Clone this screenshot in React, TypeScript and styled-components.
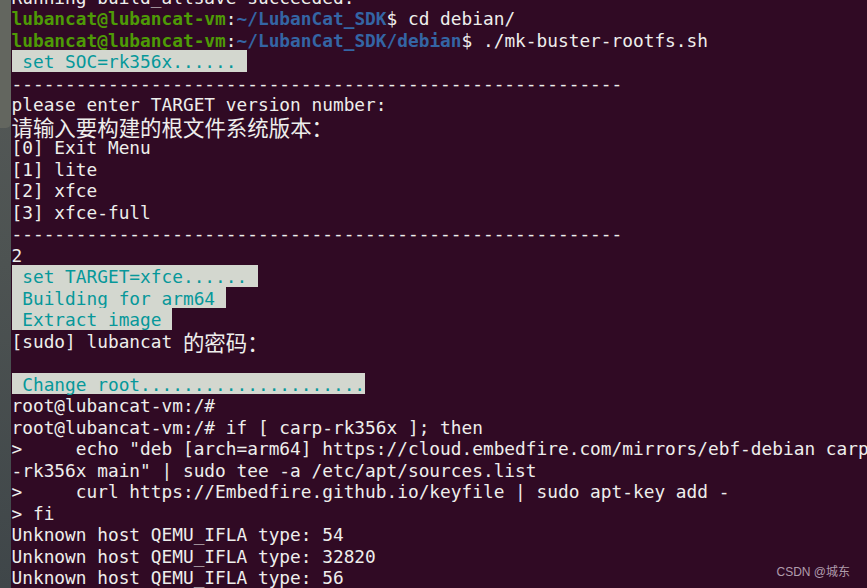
import React from "react";
import styled, { createGlobalStyle } from "styled-components";

const Global = createGlobalStyle`
  html, body { margin: 0; padding: 0; background: #300a24; overflow: hidden; }
  #root { height: 100vh; }
`;

const Page = styled.div`
  position: relative;
  display: flex;
  height: 100vh;
  overflow: hidden;
  background: #300a24;
`;

const Dock = styled.div`
  flex: 0 0 11px;
  display: flex;
  flex-direction: column;
  background: linear-gradient(180deg, #565a58 0%, #4d5352 45%, #3f4649 100%);
`;

const DockTop = styled.div`
  height: 128px;
  background: #63665f;
  border-bottom-right-radius: 5px;
`;

const Terminal = styled.div`
  flex: 1;
  min-width: 0;
  margin-top: -14.5px;
  padding-left: 0.5px;
  font-family: "DejaVu Sans Mono", "Liberation Mono", monospace;
  font-size: 17.81px;
  color: #eeeeec;
`;

const Line = styled.div`
  height: 21.5px;
  line-height: 21.5px;
  padding-top: 1px;
  box-sizing: border-box;
  white-space: pre;
`;

const Prompt = styled.span<{ $tone: "user" | "path" }>`
  font-weight: bold;
  color: ${(p) => (p.$tone === "user" ? "#4e9a06" : "#3465a4")};
`;

const Highlight = styled.span`
  display: inline-block;
  vertical-align: top;
  margin-top: -1px;
  padding-top: 1px;
  height: 21.5px;
  box-sizing: border-box;
  line-height: 21.5px;
  background: #d3d7cf;
  color: #06989a;
`;

const Cjk = styled.span`
  font-family: "Noto Sans CJK SC", sans-serif;
  font-size: 21.44px;
  line-height: 15px;
  vertical-align: -3px;
`;

const Watermark = styled.div`
  position: absolute;
  right: 17px;
  bottom: 9px;
  font-family: "Liberation Sans", "Noto Sans CJK SC", sans-serif;
  font-size: 12px;
  color: rgba(225, 215, 225, 0.72);
`;

type Seg = { t: string; k?: "user" | "path" | "cjk" };
type Row = { segs?: Seg[]; hl?: string };

const dashes = "-".repeat(57);

const rows: Row[] = [
  { segs: [{ t: "Running build_allsave succeeded." }] },
  {
    segs: [
      { t: "lubancat@lubancat-vm", k: "user" },
      { t: ":" },
      { t: "~/LubanCat_SDK", k: "path" },
      { t: "$ cd debian/" },
    ],
  },
  {
    segs: [
      { t: "lubancat@lubancat-vm", k: "user" },
      { t: ":" },
      { t: "~/LubanCat_SDK/debian", k: "path" },
      { t: "$ ./mk-buster-rootfs.sh" },
    ],
  },
  { hl: " set SOC=rk356x...... " },
  { segs: [{ t: dashes }] },
  { segs: [{ t: "please enter TARGET version number:" }] },
  { segs: [{ t: "请输入要构建的根文件系统版本：", k: "cjk" }] },
  { segs: [{ t: "[0] Exit Menu" }] },
  { segs: [{ t: "[1] lite" }] },
  { segs: [{ t: "[2] xfce" }] },
  { segs: [{ t: "[3] xfce-full" }] },
  { segs: [{ t: dashes }] },
  { segs: [{ t: "2" }] },
  { hl: " set TARGET=xfce...... " },
  { hl: " Building for arm64 " },
  { hl: " Extract image " },
  { segs: [{ t: "[sudo] lubancat " }, { t: "的密码：", k: "cjk" }] },
  { segs: [] },
  { hl: " Change root....................." },
  { segs: [{ t: "root@lubancat-vm:/#" }] },
  { segs: [{ t: "root@lubancat-vm:/# if [ carp-rk356x ]; then" }] },
  {
    segs: [
      {
        t: '>     echo "deb [arch=arm64] https://cloud.embedfire.com/mirrors/ebf-debian carp',
      },
    ],
  },
  { segs: [{ t: '-rk356x main" | sudo tee -a /etc/apt/sources.list' }] },
  { segs: [{ t: ">     curl https://Embedfire.github.io/keyfile | sudo apt-key add -" }] },
  { segs: [{ t: "> fi" }] },
  { segs: [{ t: "Unknown host QEMU_IFLA type: 54" }] },
  { segs: [{ t: "Unknown host QEMU_IFLA type: 32820" }] },
  { segs: [{ t: "Unknown host QEMU_IFLA type: 56" }] },
];

function renderSeg(s: Seg, i: number) {
  if (s.k === "user" || s.k === "path") {
    return (
      <Prompt key={i} $tone={s.k}>
        {s.t}
      </Prompt>
    );
  }
  if (s.k === "cjk") return <Cjk key={i}>{s.t}</Cjk>;
  return <React.Fragment key={i}>{s.t}</React.Fragment>;
}

export default function App() {
  return (
    <Page>
      <Global />
      <Dock>
        <DockTop />
      </Dock>
      <Terminal>
        {rows.map((r, i) => (
          <Line key={i}>
            {r.hl !== undefined ? <Highlight>{r.hl}</Highlight> : r.segs?.map(renderSeg)}
          </Line>
        ))}
      </Terminal>
      <Watermark>CSDN @城东</Watermark>
    </Page>
  );
}
